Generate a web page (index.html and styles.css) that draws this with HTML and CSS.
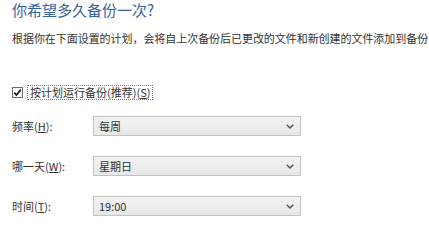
FILE: index.html
```html
<!DOCTYPE html>
<html lang="zh-CN">
<head>
<meta charset="utf-8">
<title>备份计划</title>
<link rel="stylesheet" href="styles.css">
</head>
<body>
<div class="page">
  <h1 class="title">你希望多久备份一次?</h1>
  <p class="desc">根据你在下面设置的计划，会将自上次备份后已更改的文件和新创建的文件添加到备份</p>
  <div class="check-row">
    <span class="checkbox">
      <svg width="9" height="9" viewBox="0 0 9 9"><path d="M1.2 4.6 L3.5 7 L7.8 1.6" fill="none" stroke="#1a1a1a" stroke-width="1.7"/></svg>
    </span>
    <span class="check-label">按计划运行备份(推荐)(<u>S</u>)</span>
  </div>
  <div class="form">
    <div class="row">
      <span class="label">频率(<u>H</u>):</span>
      <div class="select"><span>每周</span><svg class="chev" width="8" height="5" viewBox="0 0 8 5"><path d="M0.8 0.8 L4 4 L7.2 0.8" fill="none" stroke="#555" stroke-width="1.4"/></svg></div>
    </div>
    <div class="row">
      <span class="label">哪一天(<u>W</u>):</span>
      <div class="select"><span>星期日</span><svg class="chev" width="8" height="5" viewBox="0 0 8 5"><path d="M0.8 0.8 L4 4 L7.2 0.8" fill="none" stroke="#555" stroke-width="1.4"/></svg></div>
    </div>
    <div class="row">
      <span class="label">时间(<u>T</u>):</span>
      <div class="select"><span>19:00</span><svg class="chev" width="8" height="5" viewBox="0 0 8 5"><path d="M0.8 0.8 L4 4 L7.2 0.8" fill="none" stroke="#555" stroke-width="1.4"/></svg></div>
    </div>
  </div>
</div>
</body>
</html>
```
FILE: styles.css
```css
html, body {
  margin: 0;
  padding: 0;
  background: #ffffff;
}
body {
  font-family: "Noto Sans CJK SC", "Noto Sans", sans-serif;
  color: #333333;
  font-size: 11px;
}
.page {
  padding: 0 0 0 12px;
}
.title {
  margin: 0;
  font-size: 15px;
  line-height: 20px;
  font-weight: normal;
  color: #3563a0;
}
.desc {
  margin: 10px 0 0 0;
  line-height: 16px;
  white-space: nowrap;
  letter-spacing: -0.05px;
}
.check-row {
  margin-top: 38px;
  display: flex;
  align-items: center;
  height: 16px;
}
.checkbox {
  width: 9px;
  height: 9px;
  border: 1px solid #6e6e6e;
  background: #fff;
  display: flex;
  align-items: center;
  justify-content: center;
}
.check-label {
  margin-left: 4px;
  padding: 0 2px;
  border: 1px dotted #7a7a7a;
  line-height: 13px;
}
.form {
  margin-top: 16px;
  display: flex;
  flex-direction: column;
  gap: 20px;
}
.row {
  display: flex;
  align-items: center;
  height: 20px;
}
.label {
  width: 81px;
}
.select {
  box-sizing: border-box;
  width: 208px;
  height: 20px;
  border: 1px solid #c2c2c2;
  background: linear-gradient(#f3f3f3, #e7e7e7);
  display: flex;
  align-items: center;
  justify-content: space-between;
  padding: 0 6px 0 5px;
}
.chev {
  display: block;
}
u {
  text-decoration: underline;
  text-underline-offset: 1px;
}
```
